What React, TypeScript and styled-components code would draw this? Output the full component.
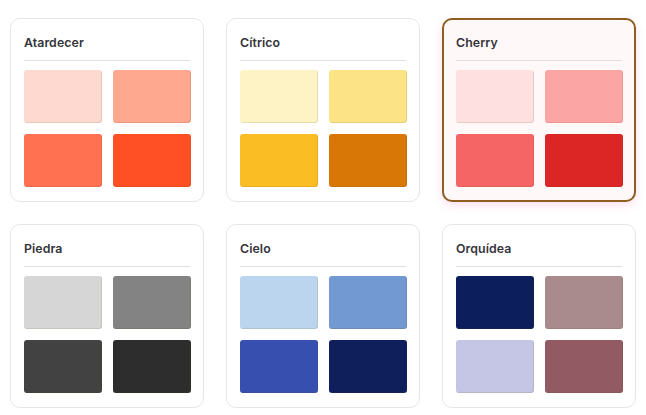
import React from 'react';
import styled, { createGlobalStyle } from 'styled-components';

const GlobalStyle = createGlobalStyle`
  html, body {
    margin: 0;
    padding: 0;
    background: #ffffff;
    font-family: Inter, 'Noto Sans', sans-serif;
  }
`;

const Grid = styled.div`
  display: grid;
  grid-template-columns: repeat(3, 194px);
  column-gap: 22px;
  row-gap: 22px;
  padding: 18px 10px;
`;

const Card = styled.section<{ $active?: boolean }>`
  box-sizing: border-box;
  height: 184px;
  padding: ${(p) => (p.$active ? '13px 12px' : '14px 13px')};
  border-radius: 10px;
  border: ${(p) => (p.$active ? '2px solid #8d5e20' : '1px solid #e6e6e9')};
  background: ${(p) => (p.$active ? '#fff8f8' : '#ffffff')};
  box-shadow: ${(p) =>
    p.$active ? '0 3px 10px rgba(246, 170, 205, 0.4)' : 'none'};
  display: flex;
  flex-direction: column;
`;

const Title = styled.h3`
  margin: 2px 0 0 0;
  font-size: 12.3px;
  font-weight: 600;
  color: #34343a;
  line-height: 16px;
  letter-spacing: 0.1px;
`;

const Divider = styled.div`
  flex: 0 0 1px;
  height: 1px;
  background: #e0e0e4;
  margin: 9px 0 9px 0;
`;

const Swatches = styled.div`
  display: grid;
  grid-template-columns: 78px 78px;
  grid-auto-rows: 53px;
  column-gap: 11px;
  row-gap: 11px;
`;

const Swatch = styled.div<{ $color: string }>`
  border-radius: 3px;
  background: ${(p) => p.$color};
  box-shadow: inset -1px -1px 0 rgba(90, 60, 0, 0.12);
`;

const palettes = [
  { name: 'Atardecer', colors: ['#fdd9cf', '#fea98f', '#ff7150', '#ff4f25'] },
  { name: 'Cítrico', colors: ['#fdf3c4', '#fbe386', '#fabd23', '#d97706'] },
  { name: 'Cherry', colors: ['#fee0e0', '#fca5a5', '#f66565', '#dc2626'], active: true },
  { name: 'Piedra', colors: ['#d6d6d6', '#838383', '#424242', '#2d2d2d'] },
  { name: 'Cielo', colors: ['#bad5ed', '#7299d2', '#3750b0', '#0f1f5c'] },
  { name: 'Orquídea', colors: ['#0c1f5c', '#a98b8d', '#c5c6e5', '#925b63'] },
];

export default function App() {
  return (
    <>
      <GlobalStyle />
      <Grid>
        {palettes.map((p) => (
          <Card key={p.name} $active={p.active}>
            <Title>{p.name}</Title>
            <Divider />
            <Swatches>
              {p.colors.map((c) => (
                <Swatch key={c} $color={c} />
              ))}
            </Swatches>
          </Card>
        ))}
      </Grid>
    </>
  );
}
